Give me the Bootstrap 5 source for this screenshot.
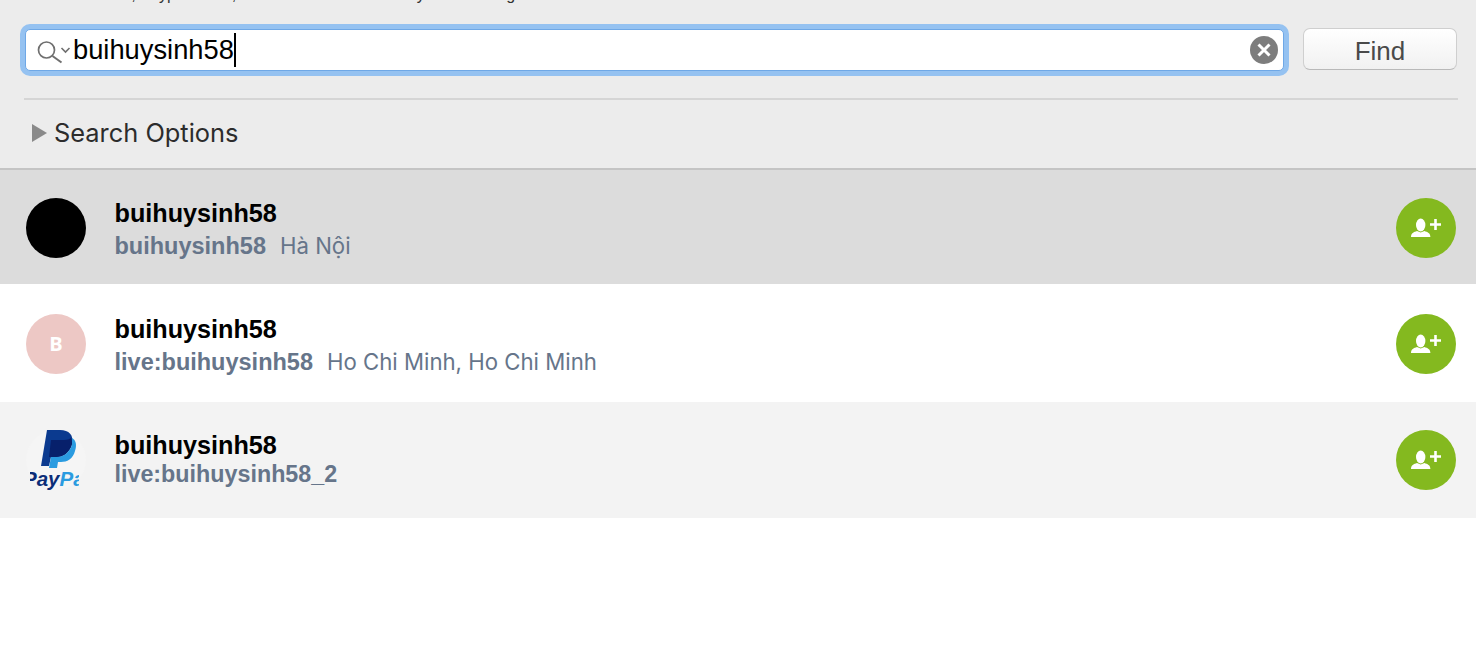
<!DOCTYPE html>
<html lang="en">

<head>
  <meta charset="UTF-8">
  <meta name="viewport" content="width=device-width, initial-scale=1">
  <link href="https://cdn.jsdelivr.net/npm/bootstrap@5.3.3/dist/css/bootstrap.min.css" rel="stylesheet">
  <script src="https://cdn.jsdelivr.net/npm/bootstrap@5.3.3/dist/js/bootstrap.bundle.min.js"></script>
  <title>Find contacts</title>
  <style>
    html, body { height: 100%; overflow: hidden; background: #fff; }
    body { font-family: "Inter", "Liberation Sans", sans-serif; }

    .search-head { height: 170px; background: #ececec; border-bottom: 2px solid #c4c4c4; padding: 0 19px 0 24px; }
    .head-note { height: 3px; margin: 0 0 25px 22px; overflow: hidden; display: flex; align-items: flex-end; font-family: "Liberation Sans", sans-serif; font-size: 16px; line-height: 1; color: #333; white-space: nowrap; }
    .search-box { height: 42px; margin: 1px 3px 0 1px; background: #fff; border: 1px solid #6fa8e6; border-radius: 5px; box-shadow: 0 0 0 5px #95c2f1; padding: 0 5px 0 10px; }
    .search-text { font-family: "Liberation Sans", sans-serif; font-size: 27.3px; color: #000; line-height: 34px; border-right: 2px solid #000; margin-left: 1px; }
    .find-btn { width: 154px; height: 42px; font-family: "Liberation Sans", sans-serif; font-size: 26px; line-height: 1; color: #4a4a4a; background: linear-gradient(#fff, #f1f1f1); border: 1px solid #cfcfcf; border-bottom-color: #b9b9b9; border-radius: 7px; padding: 3px 0 0; }
    .head-rule { height: 2px; background: #d5d5d5; margin: 27px -1px 0 0; }
    .options-row { height: 66px; }
    .options-arrow { width: 0; height: 0; border-style: solid; border-width: 9px 0 9px 15px; border-color: transparent transparent transparent #8a8a8a; margin: 0 7px 0 8px; }
    .options-label { font-size: 25.4px; color: #2c2c2c; }

    .result-row { height: 116px; padding: 0 20px 0 26px; }
    .result-selected { background: #dcdcdc; height: 114px; padding-top: 2px; }
    .result-plain { height: 118px; padding-top: 2px; }
    .result-alt { background: #f3f3f3; }
    .avatar-round { width: 60px; height: 60px; border-radius: 50%; flex-shrink: 0; margin-right: 28.5px; }
    .avatar-black { background: #000; }
    .avatar-pink { background: #edc8c5; color: #fff; font-family: "Open Sans", sans-serif; font-weight: 700; font-size: 20px; }
    .avatar-logo { background: #f5f5f5; }
    .contact-text { padding-top: 3px; }
    .contact-name { font-family: "Liberation Sans", sans-serif; font-weight: 700; font-size: 25.2px; line-height: 30px; color: #000; }
    .contact-sub { margin-top: 3px; font-size: 22.2px; line-height: 30px; color: #66758a; white-space: nowrap; }
    .contact-text-only { padding-top: 0; margin-top: -2px; }
    .contact-text-only .contact-sub { margin-top: -1px; }
    .contact-id { font-family: "Liberation Sans", sans-serif; font-weight: 700; font-size: 23.5px; margin-right: 14px; }
    .contact-text-only .contact-id { font-size: 23.3px; }
    .add-btn { width: 60px; height: 60px; border-radius: 50%; background: #84b91f; border: 0; padding: 0; }
  </style>
</head>

<body>

  <div class="search-head">
    <div class="head-note">Enter Name, Skype Name, or Email address of who you're looking for</div>
    <div class="d-flex align-items-start gap-3">
      <div class="search-box d-flex align-items-center flex-grow-1">
        <svg width="36" height="30" viewBox="0 0 36 30" fill="none" stroke="#6f6f6f" class="flex-shrink-0">
          <circle cx="10.5" cy="15" r="8" stroke-width="1.7" />
          <path d="M16.5 21l9 6.5" stroke-width="2" />
          <path d="M25.5 13l4 4 4-4" stroke-width="1.6" />
        </svg>
        <span class="search-text">buihuysinh58</span>
        <svg width="28" height="28" viewBox="0 0 28 28" class="ms-auto flex-shrink-0">
          <circle cx="14" cy="14" r="14" fill="#7d7d7d" />
          <path d="M8.5 8.5l11 11M19.5 8.5l-11 11" stroke="#fff" stroke-width="3" />
        </svg>
      </div>
      <button type="button" class="find-btn flex-shrink-0">Find</button>
    </div>
    <div class="head-rule"></div>
    <div class="options-row d-flex align-items-center">
      <span class="options-arrow"></span>
      <span class="options-label">Search Options</span>
    </div>
  </div>

  <div class="result-row result-selected d-flex align-items-center">
    <div class="avatar-round avatar-black"></div>
    <div class="contact-text flex-grow-1">
      <div class="contact-name">buihuysinh58</div>
      <div class="contact-sub"><span class="contact-id">buihuysinh58</span><span>Hà Nội</span></div>
    </div>
    <button type="button" class="add-btn d-flex align-items-center justify-content-center" aria-label="Add contact">
      <svg width="32" height="24" viewBox="0 0 32 24" fill="#fff">
        <ellipse cx="10.7" cy="9" rx="4.7" ry="6.5" />
        <path d="M1 21c0-4 3-5 6-6l3.7 1.5 3.7-1.5c3 1 6 2 6 6z" />
        <path d="M24.2 3h2.6v4.2H31v2.6h-4.2V14h-2.6V9.800H20V7.200h4.200z" />
      </svg>
    </button>
  </div>

  <div class="result-row result-plain d-flex align-items-center">
    <div class="avatar-round avatar-pink d-flex align-items-center justify-content-center">B</div>
    <div class="contact-text flex-grow-1">
      <div class="contact-name">buihuysinh58</div>
      <div class="contact-sub"><span class="contact-id">live:buihuysinh58</span><span>Ho Chi Minh, Ho Chi Minh</span></div>
    </div>
    <button type="button" class="add-btn d-flex align-items-center justify-content-center" aria-label="Add contact">
      <svg width="32" height="24" viewBox="0 0 32 24" fill="#fff">
        <ellipse cx="10.7" cy="9" rx="4.7" ry="6.5" />
        <path d="M1 21c0-4 3-5 6-6l3.7 1.5 3.7-1.5c3 1 6 2 6 6z" />
        <path d="M24.2 3h2.6v4.2H31v2.6h-4.2V14h-2.6V9.800H20V7.200h4.200z" />
      </svg>
    </button>
  </div>

  <div class="result-row result-alt d-flex align-items-center">
    <div class="avatar-round avatar-logo">
      <svg width="60" height="60" viewBox="0 0 60 60">
        <defs>
          <clipPath id="logoClip"><rect x="4" y="40" width="49" height="20" /></clipPath>
        </defs>
        <path d="M21 0h13c9 0 14 5 12 14-2 9-9 13-16 13h-5l-2 9H15z" fill="#0b3a8f" />
        <path d="M46 8c4 2 5 7 3 13-2 8-8 11-14 11h-3l-1 6h-8l2-11h5c7 0 14-4 16-13z" fill="#2a9be0" />
        <path d="M25 10l-2 17h7c7 0 13-4 16-13 0-2 0-4-1-6-3 2-6 2-9 2z" fill="#07206b" />
        <g clip-path="url(#logoClip)">
          <text x="-3" y="55.500" font-family="Liberation Sans, sans-serif" font-weight="700" font-style="italic" font-size="20.500"><tspan fill="#0b2d78">Pay</tspan><tspan fill="#2a9be0">Pal</tspan></text>
        </g>
      </svg>
    </div>
    <div class="contact-text contact-text-only flex-grow-1">
      <div class="contact-name">buihuysinh58</div>
      <div class="contact-sub"><span class="contact-id">live:buihuysinh58_2</span></div>
    </div>
    <button type="button" class="add-btn d-flex align-items-center justify-content-center" aria-label="Add contact">
      <svg width="32" height="24" viewBox="0 0 32 24" fill="#fff">
        <ellipse cx="10.7" cy="9" rx="4.7" ry="6.5" />
        <path d="M1 21c0-4 3-5 6-6l3.7 1.5 3.7-1.5c3 1 6 2 6 6z" />
        <path d="M24.2 3h2.6v4.2H31v2.6h-4.2V14h-2.6V9.800H20V7.200h4.200z" />
      </svg>
    </button>
  </div>

</body>

</html>
